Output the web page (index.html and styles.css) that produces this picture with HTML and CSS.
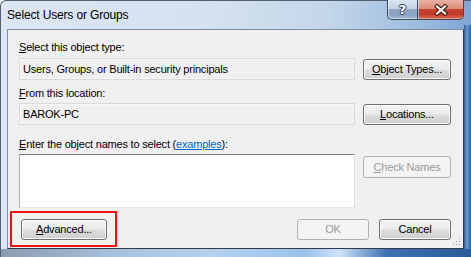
FILE: index.html
```html
<!DOCTYPE html>
<html>
<head>
<meta charset="utf-8">
<title>Select Users or Groups</title>
<link rel="stylesheet" href="styles.css">
</head>
<body>
<div class="window">
  <div class="titlebar">
    <div class="title">Select Users or Groups</div>
    <div class="caption">
      <div class="cap help"><span class="qmark">?</span></div>
      <div class="cap close">
        <svg width="14" height="12" viewBox="0 0 14 12">
          <path d="M3 2.5 L11 9.5 M11 2.5 L3 9.5" stroke="#4a1e16" stroke-width="4.4" stroke-linecap="square" fill="none"/>
          <path d="M3 2.5 L11 9.5 M11 2.5 L3 9.5" stroke="#ffffff" stroke-width="2.2" stroke-linecap="square" fill="none"/>
        </svg>
      </div>
    </div>
  </div>
  <div class="client">
    <div class="label"><u>S</u>elect this object type:</div>
    <div class="row row-first">
      <div class="field">Users, Groups, or Built-in security principals</div>
      <button class="btn"><u>O</u>bject Types...</button>
    </div>
    <div class="label label-2"><u>F</u>rom this location:</div>
    <div class="row row-second">
      <div class="field">BAROK-PC</div>
      <button class="btn"><u>L</u>ocations...</button>
    </div>
    <div class="label label-3"><u>E</u>nter the object names to select (<span class="link">examples</span>):</div>
    <div class="row row-third">
      <div class="editbox"></div>
      <button class="btn btn-disabled btn-top"><u>C</u>heck Names</button>
    </div>
    <div class="footer">
      <div class="highlight">
        <button class="btn btn-adv"><u>A</u>dvanced...</button>
      </div>
      <div class="footer-right">
        <button class="btn btn-disabled btn-small">OK</button>
        <button class="btn btn-small">Cancel</button>
      </div>
    </div>
    <svg class="grip" width="8" height="8" viewBox="0 0 8 8">
      <rect x="6" y="0" width="1" height="1" fill="#9aa0a6"/>
      <rect x="3" y="3" width="1" height="1" fill="#9aa0a6"/>
      <rect x="6" y="3" width="1" height="1" fill="#9aa0a6"/>
      <rect x="0" y="6" width="1" height="1" fill="#9aa0a6"/>
      <rect x="3" y="6" width="1" height="1" fill="#9aa0a6"/>
      <rect x="6" y="6" width="1" height="1" fill="#9aa0a6"/>
    </svg>
  </div>
</div>
</body>
</html>
```

FILE: styles.css
```css
* { box-sizing: border-box; }

html, body {
  margin: 0;
  padding: 0;
  background: #ffffff;
}

body {
  width: 471px;
  height: 257px;
  overflow: hidden;
  font-family: "Liberation Sans", Arial, sans-serif;
  font-size: 11px;
  letter-spacing: -0.2px;
  color: #000;
}

.window {
  width: 471px;
  height: 257px;
  display: flex;
  flex-direction: column;
  border-radius: 6px 0 0 0;
  border-left: 1px solid #55606e;
  border-top: 1px solid #55606e;
  background:
    linear-gradient(to right, #8a9bb0 0%, #a9c3df 25%, #b4d1ef 45%, #9cc2ea 65%, #cfe4fa 72%, #3f72b3 82%, #2a5a98 100%) left bottom / 100% 8px no-repeat,
    linear-gradient(to right, #2f5f9d 0%, #6a9bd6 45%, #2c5b97 100%) right 24px / 7px 100% no-repeat,
    linear-gradient(to right, #dce7f3 0%, #d4e1ef 45%, #c3d6ea 70%, #9fbddf 88%, #7ea5d4 100%);
  position: relative;
}

.titlebar {
  height: 28px;
  display: flex;
  justify-content: space-between;
  align-items: flex-start;
  flex: none;
}

.title {
  padding: 7px 0 0 6px;
  font-size: 12px;
  letter-spacing: -0.15px;
  color: #000;
  line-height: 15px;
}

.caption {
  display: flex;
  margin-right: 7px;
  margin-top: -1px;
}

.cap {
  height: 20px;
  display: flex;
  align-items: center;
  justify-content: center;
  border: 1px solid #3d4a5c;
  border-top: none;
}

.help {
  width: 30px;
  border-right: none;
  border-radius: 0 0 0 5px;
  background: linear-gradient(to bottom, #dbe5f0 0%, #c3d3e5 45%, #8fa7c3 50%, #8aa4c4 80%, #a7c0dc 100%);
  box-shadow: inset 1px 0 0 rgba(255,255,255,0.5), inset 0 -1px 0 rgba(255,255,255,0.4);
}

.qmark {
  font-family: "DejaVu Sans", sans-serif;
  font-weight: bold;
  font-size: 13px;
  color: #fff;
  letter-spacing: 0;
  text-shadow: 1px 0 0 #2e3b4c, -1px 0 0 #2e3b4c, 0 1px 0 #2e3b4c, 0 -1px 0 #2e3b4c;
  margin-top: -1px;
}

.close {
  width: 47px;
  border-radius: 0 0 5px 0;
  background: linear-gradient(to bottom, #eab1a4 0%, #dd8d7c 45%, #c8422f 50%, #c23a28 75%, #d8705c 100%);
  box-shadow: inset 1px 0 0 rgba(255,255,255,0.45), inset 0 -1px 0 rgba(255,200,180,0.5);
}

.close svg { display: block; }

.client {
  flex: 1;
  margin: 0 7px 8px 6px;
  background: #f0f0f0;
  border: 1px solid #7d8ea4;
  border-right-color: #2f3b4a;
  border-bottom-color: #2f3b4a;
  padding: 10px 12px 0 11px;
  display: flex;
  flex-direction: column;
  position: relative;
}

.label {
  height: 15px;
  line-height: 15px;
  white-space: nowrap;
}

.label-2 { margin-top: 6px; }
.label-3 { margin-top: 12px; }

.link {
  color: #0066cc;
  text-decoration: underline;
}

.row {
  display: grid;
  grid-template-columns: 336px 88px;
  column-gap: 8px;
  align-items: end;
}

.row-first { margin-top: 3px; }
.row-second { margin-top: 2px; }
.row-third { margin-top: 2px; align-items: start; }

.field {
  height: 22px;
  line-height: 20px;
  padding-left: 3px;
  border: 1px solid #dadada;
  background: #f0f0f0;
  box-shadow: inset 0 0 0 1px #f7f7f7;
  white-space: nowrap;
}

.editbox {
  height: 54px;
  background: #fff;
  border: 1px solid #e2e3ea;
  border-top-color: #7c7d80;
  border-left-color: #abadb3;
  border-right-color: #dbdfe6;
  border-bottom-color: #e3e9ef;
}

.btn {
  height: 21px;
  padding: 0;
  margin: 0;
  font-family: "Liberation Sans", Arial, sans-serif;
  font-size: 11px;
  letter-spacing: -0.2px;
  color: #000;
  border: 1px solid #707070;
  border-radius: 3px;
  background: linear-gradient(to bottom, #f2f2f2 0%, #ebebeb 48%, #dddddd 52%, #cfcfcf 100%);
  box-shadow: inset 0 0 0 1px #fbfbfb;
  text-align: center;
  line-height: 19px;
}

.btn-top { margin-top: 2px; height: 22px; }

.btn-disabled {
  color: #9a9a9a;
  border-color: #adb2b5;
  background: #f4f4f4;
  box-shadow: none;
}

.footer {
  margin-top: 3px;
  display: flex;
  justify-content: space-between;
  align-items: center;
}

.highlight {
  margin-left: -9px;
  height: 36px;
  border: 2px solid #ee1111;
  padding: 6px 8px 5px 9px;
}

.btn-adv { width: 86px; display: block; }

.footer-right {
  display: flex;
  gap: 10px;
  padding-top: 1px;
}

.btn-small { width: 72px; }

.grip {
  position: absolute;
  right: 2px;
  bottom: 2px;
}
```
